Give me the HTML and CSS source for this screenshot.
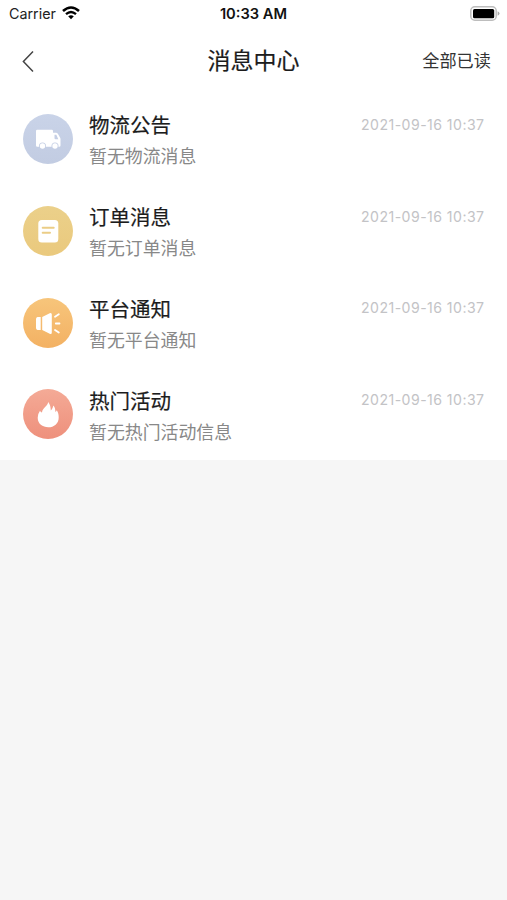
FILE: index.html
```html
<!DOCTYPE html>
<html lang="zh-CN">
<head>
<meta charset="utf-8">
<title>消息中心</title>
<link rel="stylesheet" href="styles.css">
</head>
<body>
<div class="statusbar">
  <div class="carrier"><span>Carrier</span>
    <svg class="wifi" width="18" height="14" viewBox="0 0 18 14" fill="none" stroke="#000"><path d="M1 5Q9-2 17 5" stroke-width="2.6"/><path d="M4 8.2Q9 3.7 14 8.2" stroke-width="2.3"/><path d="M6.2 10.3Q9 8.2 11.8 10.3L9 13.3Z" fill="#000" stroke="none"/></svg>
  </div>
  <div class="clock">10:33 AM</div>
  <svg class="battery" width="31" height="16" viewBox="0 0 31 16"><rect x="1.8" y=".8" width="25.4" height="13.4" rx="4" fill="#fff" stroke="#bdbdbd" stroke-width="1.5"/><rect x="4" y="3" width="21.2" height="9.2" rx="1.5"/><path d="M28.6 5.2Q30.5 6 30.5 7.5T28.6 9.8Z" fill="#aaa"/></svg>
</div>
<header class="navbar">
  <svg class="back" width="14" height="24" viewBox="0 0 14 24" fill="none" stroke="#444" stroke-width="1.5"><path d="M12 2.5 2.4 12.5 12 22.5"/></svg>
  <h1>消息中心</h1>
  <span class="read-all">全部已读</span>
</header>
<main class="list">
  <article class="row">
    <svg class="icon" viewBox="0 0 50 50">
      <defs><linearGradient id="blue" x2="0" y2="1"><stop stop-color="#c9d3e8"/><stop offset="1" stop-color="#c2cce2"/></linearGradient></defs>
      <circle cx="25" cy="25" r="25" fill="url(#blue)"/>
      <path d="M14.2 15.8H28.8Q30 15.8 30 17V18.8H33Q34.2 18.8 35 20L37 23.4Q37.5 24.2 37.5 25V31.5Q37.5 32.8 36.2 32.8H14.3Q13 32.8 13 31.5V17Q13 15.8 14.2 15.8Z" fill="#fff"/>
      <path d="M31.5 20.8H33.3L35.3 25.2H32.5Q31.5 25.2 31.5 24.2Z" fill="#c5cfe5"/>
      <g fill="#c4cee4"><circle cx="19.5" cy="32" r="3.5"/><circle cx="32" cy="32" r="3.5"/></g>
      <g fill="#fff"><circle cx="19.5" cy="32" r="2.7"/><circle cx="32" cy="32" r="2.7"/></g>
    </svg>
    <div class="body"><div class="line"><h2>物流公告</h2><time>2021-09-16 10:37</time></div><p>暂无物流消息</p></div>
  </article>
  <article class="row">
    <svg class="icon" viewBox="0 0 50 50">
      <defs><linearGradient id="gold" x2="0" y2="1"><stop stop-color="#ebd08a"/><stop offset="1" stop-color="#eac97d"/></linearGradient></defs>
      <circle cx="25" cy="25" r="25" fill="url(#gold)"/>
      <rect x="15.3" y="14" width="20" height="22.5" rx="3.5" fill="#fff"/>
      <path d="M19.7 21.7H30.7M19.7 26.7H27" stroke="#ebcd86" stroke-width="2" stroke-linecap="round"/>
    </svg>
    <div class="body"><div class="line"><h2>订单消息</h2><time>2021-09-16 10:37</time></div><p>暂无订单消息</p></div>
  </article>
  <article class="row">
    <svg class="icon" viewBox="0 0 50 50">
      <defs><linearGradient id="orange" x2="0" y2="1"><stop stop-color="#f7c57b"/><stop offset="1" stop-color="#f3b163"/></linearGradient></defs>
      <circle cx="25" cy="25" r="25" fill="url(#orange)"/>
      <path d="M14.5 19H17.7V32H14.5Q13 31.5 13 30V21Q13 19.5 14.5 19ZM19.2 19 26.7 15.2Q28.8 14.4 28.8 16.5V34.5Q28.8 36.6 26.7 35.8L19.2 32Z" fill="#fff"/>
      <path d="M32 18.8 35.8 16.3M32.8 25.5H36.5M32 32 35.8 34.6" stroke="#fff" stroke-width="1.8" stroke-linecap="round"/>
    </svg>
    <div class="body"><div class="line"><h2>平台通知</h2><time>2021-09-16 10:37</time></div><p>暂无平台通知</p></div>
  </article>
  <article class="row">
    <svg class="icon" viewBox="0 0 50 50">
      <defs><linearGradient id="red" x2="0" y2="1"><stop stop-color="#f4aa96"/><stop offset="1" stop-color="#ee907c"/></linearGradient></defs>
      <circle cx="25" cy="25" r="25" fill="url(#red)"/>
      <path d="M25.2 13C27.2 15.5 27.7 18.6 27.8 21.4 29.5 19.8 30 18.2 30.2 16.5 32 18.1 32.3 20.4 32.4 22.9Q33.3 22.4 33.8 21.3C35.3 23.8 35.7 26 35.7 28.5 35.7 34.8 31 38.3 25.3 38.3S14.7 34.8 14.7 28.8Q14.7 24.8 17 21.7 17.7 23 19 23.6C19.5 18.5 24.7 17.5 25.2 13Z" fill="#fff"/>
    </svg>
    <div class="body"><div class="line"><h2>热门活动</h2><time>2021-09-16 10:37</time></div><p>暂无热门活动信息</p></div>
  </article>
</main>
</body>
</html>
```
FILE: styles.css
```css
* { box-sizing: border-box; }
body {
  margin: 0;
  min-height: 900px;
  background: #f6f6f6;
  color: #1c1c1c;
  font-family: Inter, "Noto Sans CJK SC", sans-serif;
}
h1, h2, p { margin: 0; }
.statusbar, .navbar {
  display: grid;
  grid-template-columns: 1fr auto 1fr;
  align-items: center;
  background: #fff;
}
.statusbar { height: 27px; padding: 0 7px 0 9px; }
.carrier { display: flex; align-items: center; gap: 6px; font-size: 14.3px; color: #222; }
.wifi { margin-top: -1px; }
.clock { font-size: 14.7px; font-weight: 600; color: #111; margin-right: 2px; }
.battery { justify-self: end; }
.navbar { height: 66.3px; padding: 2px 16px 0 21px; }
.navbar h1 {
  margin-right: 5px;
  font-size: 23px;
  font-weight: 400;
  line-height: 34px;
  -webkit-text-stroke: .2px;
}
.read-all { justify-self: end; font-size: 17.2px; line-height: 26px; color: #333; }
.list { background: #fff; }
.row {
  display: flex;
  align-items: center;
  height: 91.7px;
  padding: 0 22.5px;
  gap: 16.5px;
}
.icon { width: 50px; height: 50px; flex: none; }
.body { flex: 1; padding-top: 4.6px; }
.line { display: flex; justify-content: space-between; align-items: center; height: 31px; }
.line h2 { font-size: 20.5px; font-weight: 400; line-height: 31px; -webkit-text-stroke: .2px; }
time { font-size: 14.1px; color: #c3c3c6; letter-spacing: .45px; margin-top: -3px; }
.body p { font-size: 17.9px; line-height: 31px; color: #888; }
```
